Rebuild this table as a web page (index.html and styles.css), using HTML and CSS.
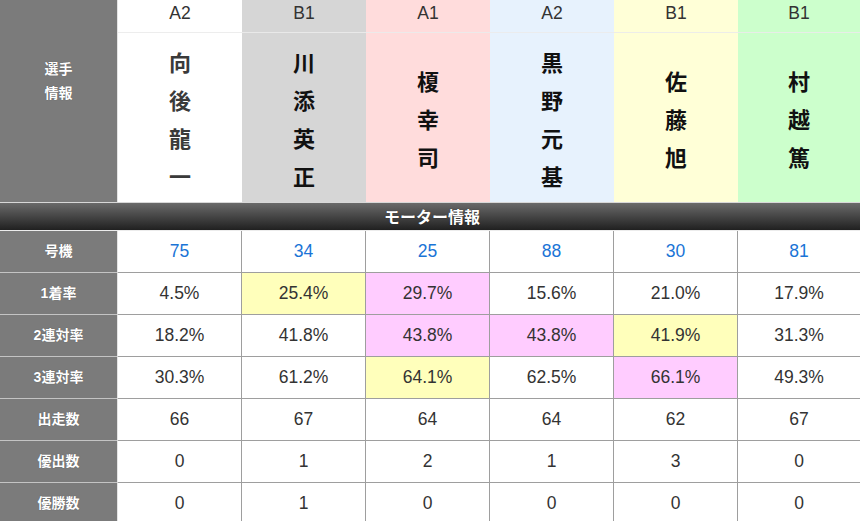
FILE: index.html
```html
<!DOCTYPE html>
<html lang="ja">
<head>
<meta charset="utf-8">
<title>出走表</title>
<link rel="stylesheet" href="styles.css">
</head>
<body>
<div class="sheet">
  <div class="players">
    <div class="label label-players">選手<br>情報</div>
    <div class="cls c1">A2</div>
    <div class="cls c2">B1</div>
    <div class="cls c3">A1</div>
    <div class="cls c4">A2</div>
    <div class="cls c5">B1</div>
    <div class="cls c6">B1</div>
    <div class="name c1 gray"><span>向</span><span>後</span><span>龍</span><span>一</span></div>
    <div class="name c2"><span>川</span><span>添</span><span>英</span><span>正</span></div>
    <div class="name c3"><span>榎</span><span>幸</span><span>司</span></div>
    <div class="name c4"><span>黒</span><span>野</span><span>元</span><span>基</span></div>
    <div class="name c5"><span>佐</span><span>藤</span><span>旭</span></div>
    <div class="name c6"><span>村</span><span>越</span><span>篤</span></div>
  </div>
  <div class="bar">モーター情報</div>
  <div class="data">
    <div class="label">号機</div>
    <div class="cell num">75</div><div class="cell num">34</div><div class="cell num">25</div><div class="cell num">88</div><div class="cell num">30</div><div class="cell num">81</div>

    <div class="label">1着率</div>
    <div class="cell">4.5%</div><div class="cell hl-y">25.4%</div><div class="cell hl-p">29.7%</div><div class="cell">15.6%</div><div class="cell">21.0%</div><div class="cell">17.9%</div>

    <div class="label">2連対率</div>
    <div class="cell">18.2%</div><div class="cell">41.8%</div><div class="cell hl-p">43.8%</div><div class="cell hl-p">43.8%</div><div class="cell hl-y">41.9%</div><div class="cell">31.3%</div>

    <div class="label">3連対率</div>
    <div class="cell">30.3%</div><div class="cell">61.2%</div><div class="cell hl-y">64.1%</div><div class="cell">62.5%</div><div class="cell hl-p">66.1%</div><div class="cell">49.3%</div>

    <div class="label">出走数</div>
    <div class="cell">66</div><div class="cell">67</div><div class="cell">64</div><div class="cell">64</div><div class="cell">62</div><div class="cell">67</div>

    <div class="label">優出数</div>
    <div class="cell">0</div><div class="cell">1</div><div class="cell">2</div><div class="cell">1</div><div class="cell">3</div><div class="cell">0</div>

    <div class="label">優勝数</div>
    <div class="cell">0</div><div class="cell">1</div><div class="cell">0</div><div class="cell">0</div><div class="cell">0</div><div class="cell">0</div>
  </div>
</div>
</body>
</html>
```
FILE: styles.css
```css
* { box-sizing: border-box; }
html, body { margin: 0; padding: 0; background: #fff; }
body {
  font-family: "Liberation Sans", Arial, "Noto Sans CJK JP", sans-serif;
  color: #333;
  width: 860px;
  overflow: hidden;
}
.sheet { width: 860px; }

.players,
.data {
  display: grid;
  grid-template-columns: 118px repeat(5, 124px) 1fr;
}
.players { grid-template-rows: 33px 169px; }

.label {
  background: #7b7b7b;
  color: #fff;
  font-family: "Liberation Sans", Arial, "Noto Sans CJK JP", sans-serif;
  font-weight: bold;
  font-size: 14px;
  text-align: center;
  border-right: 1px solid #e4e4e4;
  text-shadow: 0 0 1px rgba(0,0,0,.35);
}
.label-players {
  grid-row: 1 / span 2;
  padding-top: 57px;
  line-height: 24px;
}

.cls {
  height: 33px;
  font-size: 17.5px;
  line-height: 26px;
  text-align: center;
  color: #333;
  border-bottom: 1px solid rgba(235,235,235,.9);
}
.name {
  display: flex;
  flex-direction: column;
  justify-content: center;
  align-items: center;
  font-family: "Noto Sans CJK JP", sans-serif;
  font-weight: bold;
  font-size: 22px;
  line-height: 38px;
  color: #111;
}
.name.gray { color: #3a3a3a; }

.c1 { background: #ffffff; }
.c2 { background: #d6d6d6; }
.c3 { background: #ffdcdc; }
.c4 { background: #e7f2fd; }
.c5 { background: #ffffd7; }
.c6 { background: #ccffcc; }

.bar {
  height: 29px;
  border-top: 1px solid #d8d8d8;
  border-bottom: 1px solid #ececec;
  background: linear-gradient(#6a6a6a, #202020);
  color: #fff;
  font-family: "Noto Sans CJK JP", sans-serif;
  font-weight: bold;
  font-size: 16px;
  line-height: 26px;
  text-align: center;
  padding-left: 4px;
  text-shadow: 0 0 1px rgba(0,0,0,.6);
}

.data { grid-auto-rows: 42px; }
.data .label {
  line-height: 41px;
  border-bottom: 1px solid #c4c4c4;
}
.cell {
  font-size: 17.5px;
  line-height: 41px;
  text-align: center;
  color: #333;
  border-right: 1px solid #9e9e9e;
  border-bottom: 1px solid #9e9e9e;
}
.cell:nth-child(7n) { border-right: none; }
.cell.num { color: #1a74d6; }
.hl-y { background: #ffffbb; }
.hl-p { background: #ffccff; }
```
